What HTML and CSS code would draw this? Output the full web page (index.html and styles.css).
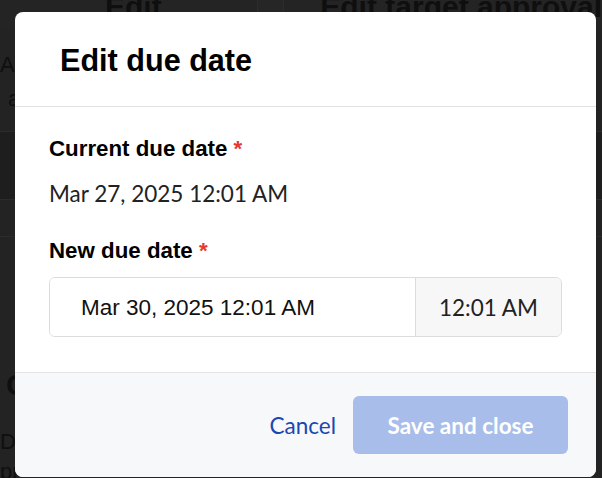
FILE: index.html
```html
<!DOCTYPE html>
<html lang="en">
<head>
<meta charset="utf-8">
<title>Edit due date</title>
<link rel="stylesheet" href="styles.css">
</head>
<body>
<div class="page">
  <div class="page-head">
    <div class="ph-cell ph-edit">Edit</div>
    <div class="ph-cell ph-gap"></div>
    <div class="ph-cell ph-target">Edit target approval</div>
  </div>
  <div class="page-row row-a">
    <div class="row-text">Ar</div>
    <div class="row-text sub">a</div>
  </div>
  <div class="page-row row-band"></div>
  <div class="page-row row-b"></div>
  <div class="page-row row-c">
    <span class="ring">C</span>
  </div>
  <div class="page-row row-d">
    <div class="row-text">D</div>
    <div class="row-text">pr</div>
  </div>
</div>

<div class="overlay">
  <div class="modal" role="dialog" aria-labelledby="modal-title">
    <header class="modal-header">
      <h1 id="modal-title" class="modal-title">Edit due date</h1>
    </header>
    <section class="modal-body">
      <div class="field">
        <div class="field-label">Current due date <span class="req">*</span></div>
        <div class="field-value">Mar 27, 2025 12:01 AM</div>
      </div>
      <div class="field">
        <div class="field-label">New due date <span class="req">*</span></div>
        <div class="date-input">
          <div class="date-part">Mar 30, 2025 12:01 AM</div>
          <div class="time-part">12:01 AM</div>
        </div>
      </div>
    </section>
    <footer class="modal-footer">
      <button class="btn-link" type="button">Cancel</button>
      <button class="btn-primary" type="button" disabled>Save and close</button>
    </footer>
  </div>
</div>
</body>
</html>
```

FILE: styles.css
```css
* { box-sizing: border-box; }

html, body {
  margin: 0;
  padding: 0;
  width: 602px;
  height: 478px;
  overflow: hidden;
}

body {
  background: #232323;
  font-family: "Liberation Sans", Arial, sans-serif;
  position: relative;
}

/* ---------- background page (dimmed) ---------- */
.page {
  color: #0f0f0f;
}

.page-head {
  display: flex;
  height: 30px;
  background: #242424;
  overflow: hidden;
}

.ph-cell {
  font-weight: bold;
  font-size: 30px;
  line-height: 30px;
  margin-top: -8px;
}

.ph-edit {
  width: 290px;
  padding-left: 105px;
  border-right: 1px solid #2c2c2c;
}

.ph-gap {
  width: 32px;
  border-right: 1px solid #2c2c2c;
  background: #262626;
}

.ph-target {
  padding-left: 36px;
  white-space: nowrap;
}

.page-row {
  border-bottom: 1px solid #2b2b2b;
}

.row-a {
  height: 102px;
  padding-top: 18px;
}

.row-text {
  font-size: 22px;
  line-height: 34px;
}

.row-text.sub {
  padding-left: 8px;
}

.row-band {
  height: 68px;
  background: #1e1e1e;
}

.row-b {
  height: 37px;
}

.row-c {
  height: 190px;
  padding-top: 131px;
  border-bottom: none;
}

.ring {
  display: inline-block;
  font-size: 30px;
  font-weight: bold;
  margin-left: 6px;
}

.row-d .row-text {
  line-height: 30px;
}

/* ---------- overlay + modal ---------- */
.overlay {
  position: absolute;
  inset: 0;
}

.modal {
  position: absolute;
  left: 15px;
  top: 12px;
  width: 581px;
  height: 465px;
  background: #ffffff;
  border-radius: 8px;
  overflow: hidden;
  display: flex;
  flex-direction: column;
}

.modal-header {
  height: 95px;
  display: flex;
  align-items: center;
  padding-left: 45px;
  border-bottom: 1px solid #e2e2e2;
}

.modal-title {
  margin: 0;
  font-family: "Liberation Sans", Arial, sans-serif;
  font-weight: bold;
  font-size: 30.6px;
  line-height: 36px;
  color: #000;
  padding-top: 1px;
}

.modal-body {
  flex: 1;
  padding: 29px 34px 0 34px;
}

.field-label {
  font-family: "Liberation Sans", Arial, sans-serif;
  font-weight: bold;
  font-size: 22.3px;
  line-height: 26px;
  color: #000;
}

.req {
  color: #e5382e;
}

.field-value {
  font-family: Lato, "Liberation Sans", sans-serif;
  font-size: 22.5px;
  line-height: 26px;
  color: #222;
  margin-top: 19px;
  margin-bottom: 31px;
}

.date-input {
  margin-top: 13px;
  width: 513px;
  height: 60px;
  display: flex;
  border: 1px solid #dcdcdc;
  border-radius: 6px;
  overflow: hidden;
}

.date-part {
  flex: 1;
  display: flex;
  align-items: center;
  padding-left: 31px;
  padding-top: 2px;
  font-family: "Liberation Sans", Arial, sans-serif;
  font-size: 22.5px;
  color: #111;
  background: #fff;
}

.time-part {
  width: 146px;
  display: flex;
  align-items: center;
  justify-content: center;
  border-left: 1px solid #dcdcdc;
  background: #f7f7f7;
  font-family: Lato, "Liberation Sans", sans-serif;
  font-size: 22.5px;
  color: #222;
}

.modal-footer {
  height: 105px;
  background: #f7f8fa;
  border-top: 1px solid #e2e3e5;
  display: flex;
  align-items: center;
  justify-content: flex-end;
  padding-right: 28px;
  gap: 17px;
}

.btn-link {
  border: none;
  background: none;
  padding: 0;
  font-family: Lato, "Liberation Sans", sans-serif;
  font-size: 22.5px;
  color: #1a47b1;
  cursor: pointer;
}

.btn-primary {
  width: 215px;
  height: 58px;
  border: none;
  border-radius: 6px;
  background: #a8bde9;
  color: #ffffff;
  font-family: Lato, "Liberation Sans", sans-serif;
  font-weight: bold;
  font-size: 22.5px;
  padding: 0;
}
```
